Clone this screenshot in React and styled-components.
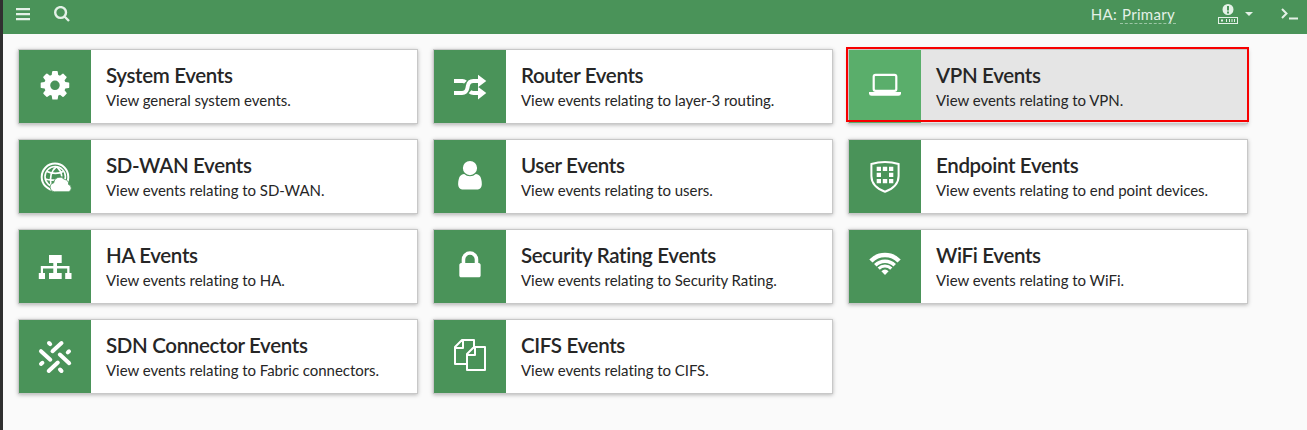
import React from "react";
import styled, { createGlobalStyle } from "styled-components";

const GlobalStyle = createGlobalStyle`
  * { box-sizing: border-box; }
  body {
    margin: 0;
    background: #fafafa;
    color: #262626;
    font-family: Lato, "Liberation Sans", sans-serif;
    font-variant-ligatures: none;
  }
`;

const Page = styled.div`
  height: 430px;
  overflow: hidden;
  border-left: 3px solid #303030;
  background: #fafafa;
`;

const TopBar = styled.header`
  display: flex;
  align-items: center;
  height: 34px;
  padding: 0 9px 6px 13px;
  background: #4a9359;
  color: #e4f1e7;
`;

const BarIcon = styled.svg`
  display: block;
  flex: none;
  width: ${(p) => p.$w}px;
  height: ${(p) => p.$h}px;
  margin: ${(p) => p.$m || "0"};
  fill: currentColor;
`;

const Status = styled.div`
  display: flex;
  gap: 3px;
  margin: 1px 42px 0 auto;
  font-size: 15px;
  line-height: 18px;
  letter-spacing: 0.3px;
`;

const StatusValue = styled.span`
  padding: 0 1px 0 2px;
  border-bottom: 1px dashed #9cc6a5;
`;

const Grid = styled.main`
  display: grid;
  grid-template-columns: repeat(3, 400px);
  grid-auto-rows: 75px;
  gap: 15px;
  padding: 15px;
`;

const Card = styled.section`
  position: relative;
  display: flex;
  border: 1px solid #c8c8c8;
  background: ${(p) => (p.$active ? "#e5e5e5" : "#fff")};
  box-shadow: 0 1px 4px rgba(0, 0, 0, 0.28);
`;

const Highlight = styled.div`
  position: absolute;
  inset: -3px -2px 1px -3px;
  border: 2px solid #f70000;
`;

const Tile = styled.div`
  display: flex;
  justify-content: center;
  flex: none;
  width: 72px;
  padding-top: 20px;
  background: ${(p) => (p.$active ? "#5aae6b" : "#4a9359")};
`;

const Glyph = styled.svg`
  display: block;
  width: 32px;
  height: 32px;
  overflow: visible;
  fill: #fff;
`;

const Body = styled.div`
  padding: 12px 15px 0;
`;

const Title = styled.h2`
  margin: 0;
  font-size: 20.5px;
  font-weight: 600;
  line-height: 26px;
  letter-spacing: -0.34px;
  white-space: nowrap;
`;

const Description = styled.p`
  margin: 0;
  font-size: 15px;
  line-height: 25px;
  letter-spacing: -0.04px;
  white-space: nowrap;
`;

const icons = {
  cog: (
    <path transform="translate(-.7 -1.400) scale(.0186)" fillRule="evenodd" d="M1152 896q0-106-75-181t-181-75-181 75-75 181 75 181 181 75 181-75 75-181zm512-109v222q0 12-8 23t-20 13l-185 28q-19 54-39 91 35 50 107 138 10 12 10 25t-9 23q-27 37-99 108t-94 71q-12 0-26-9l-138-108q-44 23-91 38-16 136-29 186-7 28-36 28h-222q-14 0-24.5-8.5t-11.5-21.5l-28-184q-49-16-90-37l-141 107q-10 9-25 9-14 0-25-11-126-114-165-168-7-10-7-23 0-12 8-23 15-21 51-66.5t54-70.5q-27-50-41-99l-183-27q-13-2-21-12.5t-8-23.5v-222q0-12 8-23t19-13l186-28q14-46 39-92-40-57-107-138-10-12-10-24 0-10 9-23 26-36 98.5-107.5t94.5-71.5q13 0 26 10l138 107q44-23 91-38 16-136 29-186 7-28 36-28h222q14 0 24.5 8.5t11.5 21.5l28 184q49 16 90 37l142-107q9-9 24-9 13 0 25 10 129 119 165 170 7 8 7 22 0 12-8 23-15 21-51 66.5t-54 70.5q26 50 41 98l183 28q13 2 21 12.500t8 23.500z" />
  ),
  random: (
    <>
      <g fill="none" stroke="#fff" strokeWidth="3.900">
        <path d="M0 11h8.500c1.200 0 2.200.4 3 1.200M16 21.800c1 .9 2 1.200 3.500 1.200H25" />
        <path d="M0 23h8c3.300 0 4.800-1.800 5.400-4.800l.5-2.600C14.500 12.600 16 11 19.200 11H25" />
      </g>
      <path d="M24 4.800L32.300 11L24 17.200zM24 16.800L32.300 23L24 29.400z" />
    </>
  ),
  laptop: (
    <>
      <rect x="4.700" y="4.800" width="22.600" height="16" rx="1.800" fill="none" stroke="#fff" strokeWidth="2.200" />
      <path d="M0 22h32v1.600q0 2.200-2.600 2.200H2.600q-2.600 0-2.600-2.200z" />
    </>
  ),
  globe: (
    <>
      <g fill="none" stroke="#fff">
        <circle cx="16" cy="16.900" r="13.300" strokeWidth="2" />
        <circle cx="16.200" cy="16.700" r="10.200" strokeWidth="1.600" />
        <path strokeWidth="1.700" d="M17.500 6.500c-5 4-7 11-5.500 19M17.500 6.500c3.500 3 5 6 5.300 10M8 11.500c5 2.500 12 2.500 16 0M6 19c5 1.500 8 1.500 12 .5" />
      </g>
      <path stroke="#4a9359" strokeWidth=".8" d="M15.500 31.800a4.500 4.500 0 0 1-.8-8.900 6 6 0 0 1 10.700-3.500 4.800 4.800 0 0 1 4.200 5.100 3.800 3.800 0 0 1-.2 7.300z" />
    </>
  ),
  user: (
    <path transform="translate(-.6 -1.400) scale(.0185)" d="M1536 1399q0 109-62.5 187t-150.5 78h-854q-88 0-150.5-78t-62.5-187q0-85 8.5-160.5t31.5-152 58.5-131 94-89 134.5-34.5q131 128 313 128t313-128q76 0 134.5 34.5t94 89 58.5 131 31.5 152 8.5 160.5zm-256-887q0 159-112.5 271.5t-271.5 112.5-271.5-112.5-112.5-271.5 112.5-271.5 271.5-112.5 271.5 112.5 112.5 271.500z" />
  ),
  shield: (
    <>
      <path fill="none" stroke="#fff" strokeWidth="2" d="M16 2c5 0 9 .6 13.600 2v12c0 8-5 12.500-13.600 15.800C7.400 28.500 2.400 24 2.400 16V4C7 2.600 11 2 16 2z" />
      <path d="M7.700 6.700h4.300v4.300H7.700zM13.800 6.700h4.400v4.300h-4.400zM20 6.700h4.300v4.300H20zM7.700 12.800H12v4.300H7.700zM20 12.800h4.300v4.300H20zM7.700 18.900H12v4.300H7.700zM13.800 18.900h4.400v4.300h-4.400zM20 18.900h4.300v4.300H20z" />
    </>
  ),
  sitemap: (
    <path d="M10 5h12.700v8H18v3h12.500v7H32.500v6h-6.300v-6h2v-4.500H18V23h4.700v6H10v-6h4.300v-4.500H4V23h2v6H-.2v-6h2v-7h12.500v-3H10z" />
  ),
  lock: (
    <path fillRule="evenodd" transform="translate(-.6 -1.100) scale(.0185)" d="M640 768h512v-192q0-106-75-181t-181-75-181 75-75 181v192zm832 96v576q0 40-28 68t-68 28h-960q-40 0-68-28t-28-68v-576q0-40 28-68t68-28h32v-192q0-184 132-316t316-132 316 132 132 316v192h32q40 0 68 28t28 68z" />
  ),
  wifi: (
    <>
      <g fill="none" stroke="#fff">
        <path strokeWidth="4.500" d="M1.900 11A19.600 19.600 0 0 1 30.100 11" />
        <path strokeWidth="3.500" d="M6.300 15.200A13.700 13.700 0 0 1 25.700 15.200" />
        <path strokeWidth="3.100" d="M9.700 18.600A8.900 8.900 0 0 1 22.300 18.600" />
      </g>
      <path d="M12.400 21.200Q16 17.900 19.600 21.200L16 25z" />
    </>
  ),
  connector: (
    <path fill="none" stroke="#fff" strokeWidth="4" strokeLinecap="round" d="M22.500 3L13.500 11.200M2 11.200L11.300 19.700M20.800 14.500L30.200 23.200M9.700 31L18.800 22.500M10 3L11.200 4.200M30 11.300L28.800 12.400M2 24L3.400 22.800M21 29.500L22.500 31" />
  ),
  files: (
    <path fill="none" stroke="#fff" strokeWidth="2" strokeLinejoin="round" d="M12 24H1V7l7-7h12v7M9 0v8H1M13 14l7-7h11v23H13zM21 7v8h-8" />
  ),
};

const cards = [
  ["cog", "System Events", "View general system events."],
  ["random", "Router Events", "View events relating to layer-3 routing."],
  ["laptop", "VPN Events", "View events relating to VPN.", true],
  ["globe", "SD-WAN Events", "View events relating to SD-WAN."],
  ["user", "User Events", "View events relating to users."],
  ["shield", "Endpoint Events", "View events relating to end point devices."],
  ["sitemap", "HA Events", "View events relating to HA."],
  ["lock", "Security Rating Events", "View events relating to Security Rating."],
  ["wifi", "WiFi Events", "View events relating to WiFi."],
  ["connector", "SDN Connector Events", "View events relating to Fabric connectors."],
  ["files", "CIFS Events", "View events relating to CIFS."],
];

export default function App() {
  return (
    <>
      <GlobalStyle />
      <Page>
        <TopBar>
          <BarIcon $w={14} $h={14} $m="0 24px 0 0" viewBox="0 0 14 14">
            <path d="M0 1h14v2.200H0zM0 6h14v2.200H0zM0 11h14v2.200H0z" />
          </BarIcon>
          <BarIcon $w={16} $h={16} viewBox="0 0 16 16">
            <path fill="none" stroke="currentColor" strokeWidth="2.400" d="M12 6.500a5.400 5.400 0 1 1-10.800 0a5.400 5.400 0 0 1 10.800 0zM10.500 10.500L15 15" />
          </BarIcon>
          <Status>
            <span>HA:</span>
            <StatusValue>Primary</StatusValue>
          </Status>
          <BarIcon $w={20} $h={20} $m="0 7px 0 0" viewBox="0 0 20 20">
            <path fillRule="evenodd" d="M10 0a5.500 5.500 0 1 1 0 11a5.500 5.500 0 0 1 0-11zM9 2v4.500h2V2zM9 7.600v1.800h2V7.600zM0 13h20v7H0zM1 14v5h18v-5z" />
            <path d="M3 15.500h2v2H3zM8 15h1v3H8zM11 15h1v3h-1zM13.500 15h1v3h-1zM16 15h1v3h-1z" />
          </BarIcon>
          <BarIcon $w={8} $h={4} $m="0 28px 0 0" viewBox="0 0 8 4">
            <path d="M0 0h8L4 4z" />
          </BarIcon>
          <BarIcon $w={17} $h={12} viewBox="0 0 17 12">
            <path fill="none" stroke="currentColor" strokeWidth="2" d="M1 1l4.500 4.500L1 10M8 10.500h9" />
          </BarIcon>
        </TopBar>
        <Grid>
          {cards.map(([icon, title, text, active]) => (
            <Card key={title} $active={active}>
              <Tile $active={active}>
                <Glyph viewBox="0 0 32 32">{icons[icon]}</Glyph>
              </Tile>
              <Body>
                <Title>{title}</Title>
                <Description>{text}</Description>
              </Body>
              {active && <Highlight />}
            </Card>
          ))}
        </Grid>
      </Page>
    </>
  );
}
